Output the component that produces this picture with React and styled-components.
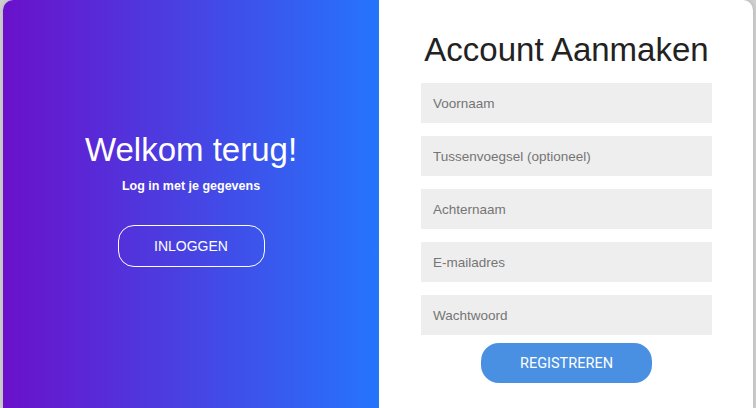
import React from 'react';
import styled, { createGlobalStyle } from 'styled-components';

const GlobalStyle = createGlobalStyle`
  html, body {
    margin: 0;
    padding: 0;
    height: 100%;
    overflow: hidden;
  }

  body {
    background: #cfcfcf;
    font-family: Arial, "Liberation Sans", sans-serif;
  }
`;

const Container = styled.div`
  display: grid;
  grid-template-columns: 376px 1fr;
  margin: 0 3px;
  height: 100vh;
  border-radius: 10px 10px 0 0;
  overflow: hidden;
  background: #fff;
  box-shadow: 0 0 4px rgba(0, 0, 0, 0.15);
`;

const Overlay = styled.section`
  display: flex;
  flex-direction: column;
  align-items: center;
  justify-content: center;
  padding-bottom: 12px;
  background: linear-gradient(to right, #6a11cb, #2575fc);
  color: #fff;
`;

const Title = styled.h1`
  margin: 0;
  font-weight: 400;
  font-size: 33px;
  line-height: 40px;
  white-space: nowrap;
  color: ${({ $light }) => ($light ? '#fff' : '#222')};
`;

const Subtitle = styled.p`
  margin: 9px 0 0;
  font-size: 12.5px;
  font-weight: 700;
`;

const GhostButton = styled.button`
  margin-top: 32px;
  width: 147px;
  height: 42px;
  border: 1px solid #fff;
  border-radius: 16px;
  background: transparent;
  color: #fff;
  font-family: Arial, "Liberation Sans", sans-serif;
  font-size: 14px;
`;

const FormPanel = styled.form`
  display: flex;
  flex-direction: column;
  align-items: center;
  padding: 30px 41px 0 42px;
`;

const Field = styled.input`
  box-sizing: border-box;
  width: 100%;
  height: 40px;
  margin-top: 13px;
  padding: 0 12px;
  border: none;
  background: #eee;
  font-family: Arial, "Liberation Sans", sans-serif;
  font-size: 13.5px;
  color: #333;

  &::placeholder {
    color: #757575;
  }
`;

const SubmitButton = styled.button`
  margin-top: 8px;
  width: 171px;
  height: 40px;
  border: none;
  border-radius: 18px;
  background: #4a90e2;
  color: #fff;
  font-family: Roboto, "Liberation Sans", sans-serif;
  font-size: 14.5px;
`;

const fields = [
  { type: 'text', placeholder: 'Voornaam' },
  { type: 'text', placeholder: 'Tussenvoegsel (optioneel)' },
  { type: 'text', placeholder: 'Achternaam' },
  { type: 'email', placeholder: 'E-mailadres' },
  { type: 'password', placeholder: 'Wachtwoord' },
];

const App = () => (
  <>
    <GlobalStyle />
    <Container>
      <Overlay>
        <Title $light>Welkom terug!</Title>
        <Subtitle>Log in met je gegevens</Subtitle>
        <GhostButton type="button">INLOGGEN</GhostButton>
      </Overlay>
      <FormPanel onSubmit={(e) => e.preventDefault()}>
        <Title>Account Aanmaken</Title>
        {fields.map((f) => (
          <Field key={f.placeholder} type={f.type} placeholder={f.placeholder} />
        ))}
        <SubmitButton type="submit">REGISTREREN</SubmitButton>
      </FormPanel>
    </Container>
  </>
);

export default App;
